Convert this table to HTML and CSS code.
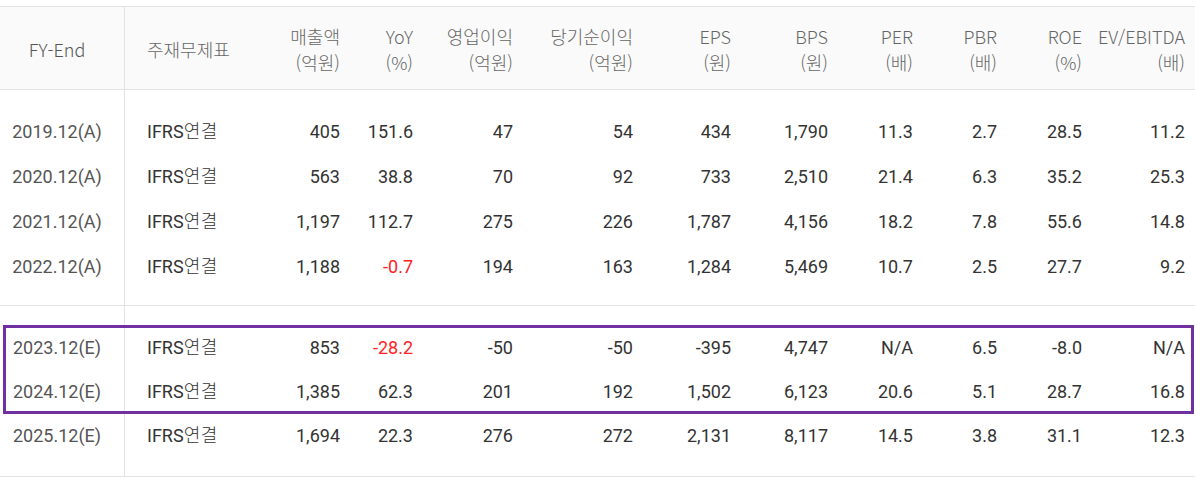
FILE: index.html
```html
<!DOCTYPE html>
<html lang="ko">
<head>
<meta charset="utf-8">
<link rel="stylesheet" href="styles.css">
</head>
<body>
<div class="fin">
  <div class="row head">
    <div class="c c1">FY-End</div>
    <div class="c c2">주재무제표</div>
    <div class="c r">매출액<br>(억원)</div>
    <div class="c r">YoY<br>(%)</div>
    <div class="c r">영업이익<br>(억원)</div>
    <div class="c r">당기순이익<br>(억원)</div>
    <div class="c r">EPS<br>(원)</div>
    <div class="c r">BPS<br>(원)</div>
    <div class="c r">PER<br>(배)</div>
    <div class="c r">PBR<br>(배)</div>
    <div class="c r">ROE<br>(%)</div>
    <div class="c r">EV/EBITDA<br>(배)</div>
  </div>
  <div class="group g1">
    <div class="row">
      <div class="c c1">2019.12(A)</div><div class="c c2">IFRS<span class="ko">연결</span></div>
      <div class="c r">405</div><div class="c r">151.6</div><div class="c r">47</div><div class="c r">54</div>
      <div class="c r">434</div><div class="c r">1,790</div><div class="c r">11.3</div><div class="c r">2.7</div><div class="c r">28.5</div><div class="c r">11.2</div>
    </div>
    <div class="row">
      <div class="c c1">2020.12(A)</div><div class="c c2">IFRS<span class="ko">연결</span></div>
      <div class="c r">563</div><div class="c r">38.8</div><div class="c r">70</div><div class="c r">92</div>
      <div class="c r">733</div><div class="c r">2,510</div><div class="c r">21.4</div><div class="c r">6.3</div><div class="c r">35.2</div><div class="c r">25.3</div>
    </div>
    <div class="row">
      <div class="c c1">2021.12(A)</div><div class="c c2">IFRS<span class="ko">연결</span></div>
      <div class="c r">1,197</div><div class="c r">112.7</div><div class="c r">275</div><div class="c r">226</div>
      <div class="c r">1,787</div><div class="c r">4,156</div><div class="c r">18.2</div><div class="c r">7.8</div><div class="c r">55.6</div><div class="c r">14.8</div>
    </div>
    <div class="row">
      <div class="c c1">2022.12(A)</div><div class="c c2">IFRS<span class="ko">연결</span></div>
      <div class="c r">1,188</div><div class="c r neg">-0.7</div><div class="c r">194</div><div class="c r">163</div>
      <div class="c r">1,284</div><div class="c r">5,469</div><div class="c r">10.7</div><div class="c r">2.5</div><div class="c r">27.7</div><div class="c r">9.2</div>
    </div>
  </div>
  <div class="group g2">
    <div class="row">
      <div class="c c1">2023.12(E)</div><div class="c c2">IFRS<span class="ko">연결</span></div>
      <div class="c r">853</div><div class="c r neg">-28.2</div><div class="c r">-50</div><div class="c r">-50</div>
      <div class="c r">-395</div><div class="c r">4,747</div><div class="c r">N/A</div><div class="c r">6.5</div><div class="c r">-8.0</div><div class="c r">N/A</div>
    </div>
    <div class="row">
      <div class="c c1">2024.12(E)</div><div class="c c2">IFRS<span class="ko">연결</span></div>
      <div class="c r">1,385</div><div class="c r">62.3</div><div class="c r">201</div><div class="c r">192</div>
      <div class="c r">1,502</div><div class="c r">6,123</div><div class="c r">20.6</div><div class="c r">5.1</div><div class="c r">28.7</div><div class="c r">16.8</div>
    </div>
    <div class="row">
      <div class="c c1">2025.12(E)</div><div class="c c2">IFRS<span class="ko">연결</span></div>
      <div class="c r">1,694</div><div class="c r">22.3</div><div class="c r">276</div><div class="c r">272</div>
      <div class="c r">2,131</div><div class="c r">8,117</div><div class="c r">14.5</div><div class="c r">3.8</div><div class="c r">31.1</div><div class="c r">12.3</div>
    </div>
  </div>
  <div class="highlight"></div>
</div>
</body>
</html>
```
FILE: styles.css
```css
html, body {
  margin: 0;
  padding: 0;
  background: #fff;
}
body {
  padding-top: 6px;
  font-family: Roboto, "Noto Sans CJK KR", sans-serif;
  color: #333;
}
.fin {
  position: relative;
  width: 1195px;
  border-top: 1px solid #e3e3e3;
}
.row {
  display: grid;
  grid-template-columns: 125px 125px 100px 73px 100px 120px 98px 97px 85px 84px 85px 103px;
}
.c {
  box-sizing: border-box;
  white-space: nowrap;
}
.c1 {
  text-align: center;
  padding-right: 10px;
  border-right: 1px solid #e3e3e3;
  color: #555;
}
.c2 {
  padding-left: 22px;
}
.ko {
  font-family: "Noto Sans CJK KR", sans-serif;
  font-weight: 300;
  letter-spacing: 0.5px;
  line-height: 1;
}
.r {
  text-align: right;
  padding-right: 10px;
}
.head {
  background: #fafafa;
  border-bottom: 1px solid #e3e3e3;
  font-family: "Noto Sans CJK KR", sans-serif;
  font-weight: 300;
  font-size: 18px;
  line-height: 26px;
  color: #666;
}
.head .c {
  padding-top: 16px;
  padding-bottom: 14px;
}
.head .c1, .head .c2 {
  display: flex;
  align-items: center;
}
.head .c1 {
  justify-content: center;
  color: #555;
}
.group {
  border-bottom: 1px solid #e3e3e3;
  font-size: 18px;
}
.g1 {
  line-height: 45px;
}
.g2 {
  line-height: 44px;
}
.g1 .row:first-child .c {
  padding-top: 19px;
}
.g1 .row:last-child .c {
  padding-bottom: 16px;
}
.g2 .row:first-child .c {
  padding-top: 20px;
}
.g2 .row:last-child .c {
  padding-bottom: 18px;
}
.neg {
  color: #ff2222;
}
.highlight {
  position: absolute;
  left: 3px;
  top: 318px;
  width: 1191px;
  height: 89px;
  box-sizing: border-box;
  border: 3px solid #7030a0;
  pointer-events: none;
}
```
